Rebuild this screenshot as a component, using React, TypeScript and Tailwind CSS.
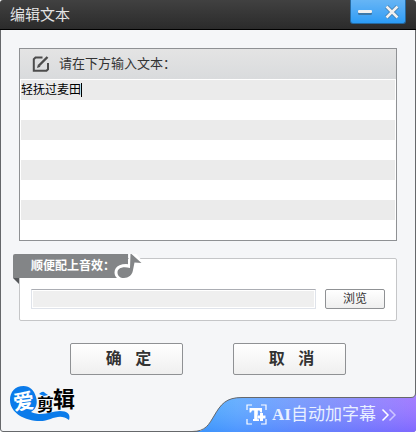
import { useState } from "react";

const buttonStyle =
  "cursor-pointer rounded-[2px] border border-[#8f9194] bg-linear-to-b from-white to-[#efefef] text-[#333333]";

const EditIcon = () => (
  <svg width="18" height="18" viewBox="0 0 18 18" fill="none">
    <path
      d="M10.5 2.5H3.5L1.8 4.2V15.8H14.5L16 14.3V8"
      stroke="#4c4c4c"
      strokeWidth="2"
    />
    <path d="M7 10.5L15.5 2" stroke="#4c4c4c" strokeWidth="2.4" />
    <path d="M5 13L6 9.3L8.5 11.8Z" fill="#4c4c4c" />
  </svg>
);

const NoteIcon = () => (
  <svg width="30" height="28" viewBox="0 0 30 28">
    <path
      d="M18 -2V12.5C9 10.5 3.5 14 3.5 18.5C3.5 22.5 7 24 10.5 24C16 24 20 21 20.5 16.5L22 8.5H28L19 -2Z"
      fill="#838587"
      stroke="white"
      strokeWidth="4"
      strokeLinejoin="round"
    />
    <path
      d="M17.5 0H18.5L28.5 9L21.5 8.5L19.8 17C19 21 15.5 24 11 24C7 24 4.5 22 4.5 18.5C4.5 14.5 9 12 17 14Z"
      fill="#838587"
    />
  </svg>
);

const Logo = () => (
  <svg
    className="overflow-visible"
    width="68"
    height="36"
    viewBox="0 0 68 36"
    aria-label="爱剪辑"
    role="img"
  >
    <path
      d="M13.5 0C5 0 0 6 0 14C0 27 15 35 30 35C41 35 49 26 59 34C61 28 57 25 50 25C41 25 33 31 21 26C26 23 28 18 26 11C24 4 20 0 13.5 0Z"
      fill="#0b7bea"
    />
    <path d="M29 8Q33 4 35 7L38 9L34 10Z" fill="#0b7bea" />
    <g className="font-['Noto_Sans_CJK_SC',sans-serif] font-bold">
      <text x="3" y="23" fontSize="21" fill="white" transform="rotate(-8 13 14)">
        爱
      </text>
      <text x="27" y="25" fontSize="17" fill="black">
        剪
      </text>
      <text x="43" y="21" fontSize="22" fill="black">
        辑
      </text>
    </g>
  </svg>
);

const CaptionIcon = () => (
  <svg width="21" height="21" viewBox="0 0 21 21" fill="none">
    <path
      d="M1 6V1H6M15 1H20V6M20 15V20H15M6 20H1V15"
      stroke="white"
      strokeWidth="1.2"
    />
    <path
      d="M3.5 4H16V8.5H14.5L13.5 6.5H11.8V15H13V17H7V15H8.2V6.5H6L5 8.5H3.5Z"
      fill="white"
    />
    <path d="M15.5 9V17M11.5 13H19.5" stroke="#659bff" strokeWidth="4.5" />
    <path d="M15.5 9V17M11.5 13H19.5" stroke="white" strokeWidth="3" />
  </svg>
);

const BannerShape = () => (
  <svg
    className="absolute right-0 bottom-0"
    width="226"
    height="42"
    viewBox="0 0 226 42"
  >
    <defs>
      <linearGradient id="banner" x1="0" y1="0" x2="1" y2="0">
        <stop offset="0" stopColor="#3ba3fb" />
        <stop offset="0.2" stopColor="#55a5ff" />
        <stop offset="0.6" stopColor="#7489fc" />
        <stop offset="1" stopColor="#966bff" />
      </linearGradient>
      <linearGradient id="shade" x1="0" y1="0" x2="0" y2="1">
        <stop offset="0.15" stopColor="#ffffff" stopOpacity="0.12" />
        <stop offset="1" stopColor="#2f5cff" stopOpacity="0.22" />
      </linearGradient>
    </defs>
    <path
      d="M2 42C16 42 19 34 24 26C31 14 36 7.5 52 7.5H221Q225.5 7.5 225.5 3H226V42Z"
      fill="url(#banner)"
    />
    <path
      d="M2 42C16 42 19 34 24 26C31 14 36 7.5 52 7.5H221Q225.5 7.5 225.5 3H226V42Z"
      fill="url(#shade)"
    />
    <path
      d="M2 41.5C16 41.5 19 34 24 26C31 14 36 7.5 52 7.5H221Q225.5 7.5 225.5 3V0"
      fill="none"
      stroke="#66686b"
    />
  </svg>
);

const TitleBar = () => (
  <header className="flex h-[30px] items-start justify-between border-b border-black bg-linear-to-b from-[#414141] to-[#2b2b2b] pr-[10px] pl-[10px]">
    <h1 className="text-[15px] leading-[29px] text-[#e4e4e4]">编辑文本</h1>
    <div className="flex h-6 w-14 rounded-b-[3px] border border-t-0 border-[#27699f] bg-linear-to-b from-[#66b5f5] to-[#2b9cf5]">
      <button
        type="button"
        aria-label="最小化"
        className="flex flex-1 cursor-pointer items-center justify-center"
      >
        <svg width="16" height="16" viewBox="0 0 16 16">
          <rect x="1" y="6" width="14" height="5" rx="1.5" fill="#3c78a8" />
          <rect x="1" y="6" width="14" height="3" rx="1" fill="#f0f0f0" />
        </svg>
      </button>
      <button
        type="button"
        aria-label="关闭"
        className="flex flex-1 cursor-pointer items-center justify-center"
      >
        <svg width="16" height="16" viewBox="0 0 16 16">
          <path d="M2.5 2.5L13.5 13.5M13.5 2.5L2.5 13.5" stroke="#3c78a8" strokeWidth="4" />
          <path d="M2.5 2.5L13.5 13.5M13.5 2.5L2.5 13.5" stroke="#f0f0f0" strokeWidth="2.6" />
        </svg>
      </button>
    </div>
  </header>
);

export default function App() {
  const [text, setText] = useState("轻抚过麦田");
  const [sound, setSound] = useState("");

  return (
    <div className="bg-white font-['Liberation_Sans','Noto_Sans_CJK_SC',sans-serif]">
      <div className="flex min-h-screen flex-col overflow-hidden rounded-[3px] bg-[#f5f6f8]">
        <TitleBar />
        <form
          className="flex flex-1 flex-col rounded-b-[3px] border-x border-b border-[#66686b]"
          onSubmit={(e) => e.preventDefault()}
        >
          <div className="mx-[18px] mt-[18px] border border-[#8f9194] bg-white">
            <label
              htmlFor="caption"
              className="flex h-[30px] items-center gap-[9px] bg-linear-to-b from-[#e4e4e4] to-[#d9dbdd] pl-3 text-[13px] text-[#333333]"
            >
              <EditIcon />
              请在下方输入文本：
            </label>
            <div className="relative px-px pt-px">
              <textarea
                id="caption"
                value={text}
                onChange={(e) => setText(e.target.value)}
                className="block h-40 w-full resize-none bg-[repeating-linear-gradient(#ebebeb_0_20px,#ffffff_20px_40px)] text-[12px] leading-5 text-black outline-0"
              />
              {text === "轻抚过麦田" && (
                <span className="absolute top-1 left-[61px] h-[14px] w-px bg-black" />
              )}
            </div>
          </div>

          <div className="relative mx-[18px] mt-[17px] rounded-[2px] border border-[#c5c6c8] bg-white px-[11px] pt-[30px] pb-[11px]">
            <label
              htmlFor="sound"
              className="absolute -top-[5px] -left-[7px] flex h-6 w-[115px] items-center rounded-tl-[2px] bg-[#838587] pl-[18px] text-[12px] font-bold text-white"
            >
              顺便配上音效：
              <span className="absolute top-6 left-0 border-t-[6px] border-l-[6px] border-t-[#55575a] border-l-transparent" />
              <span className="absolute top-0 left-[100px]">
                <NoteIcon />
              </span>
            </label>
            <div className="flex gap-[9px]">
              <input
                id="sound"
                type="text"
                value={sound}
                onChange={(e) => setSound(e.target.value)}
                className="h-5 min-w-0 flex-1 border border-[#dfe3ea] border-t-[#abadb3] bg-[#efefef] px-1 text-[12px] shadow-[inset_0_0_0_1px_#ffffff] outline-0"
              />
              <button
                type="button"
                className={`${buttonStyle} h-5 w-[60px] text-[12px] leading-[18px]`}
              >
                浏览
              </button>
            </div>
          </div>

          <div className="mt-[22px] flex justify-center gap-[50px]">
            <button
              type="submit"
              className={`${buttonStyle} h-8 w-[113px] pl-1 text-[16px] font-bold`}
            >
              确&nbsp;&nbsp;&nbsp;定
            </button>
            <button
              type="button"
              className={`${buttonStyle} h-8 w-[113px] pl-1 text-[16px] font-bold`}
            >
              取&nbsp;&nbsp;&nbsp;消
            </button>
          </div>
        </form>

        <footer className="relative -mt-[46px] flex h-[46px] items-start justify-between pl-[10px]">
          <BannerShape />
          <Logo />
          <a
            href="#"
            className="relative mt-[11px] flex h-[35px] items-center pr-[19px] pl-10 text-[17px] text-[#e9f0ff]"
          >
            <CaptionIcon />
            <span className="ml-[5px] font-['Liberation_Serif','Noto_Sans_CJK_SC',serif]">
              <b>AI</b>自动加字幕
            </span>
            <svg
              className="ml-[5px]"
              width="16"
              height="14"
              viewBox="0 0 16 14"
              fill="none"
              stroke="white"
              strokeWidth="1.5"
            >
              <path d="M1.5 1.5L7 7L1.5 12.5" />
              <path d="M8.5 1.5L14 7L8.5 12.5" opacity="0.55" />
            </svg>
          </a>
        </footer>
      </div>
    </div>
  );
}
